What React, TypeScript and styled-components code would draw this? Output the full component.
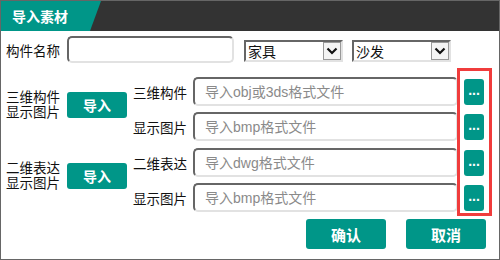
import styled, { createGlobalStyle } from 'styled-components';

const GlobalStyle = createGlobalStyle`
  html, body {
    margin: 0;
    padding: 0;
    background: #fff;
  }
  body {
    font-family: "Liberation Sans", "Noto Sans CJK SC", sans-serif;
  }
`;

const fileRows = [
  {
    title: ['三维构件', '显示图片'],
    rows: [
      { label: '三维构件', hint: '导入obj或3ds格式文件' },
      { label: '显示图片', hint: '导入bmp格式文件' },
    ],
  },
  {
    title: ['二维表达', '显示图片'],
    rows: [
      { label: '二维表达', hint: '导入dwg格式文件' },
      { label: '显示图片', hint: '导入bmp格式文件' },
    ],
  },
];

function Chevron() {
  return (
    <svg width="12" height="8" viewBox="0 0 12 8">
      <polyline points="1.5,1.5 6,6 10.5,1.5" fill="none" stroke="#111" strokeWidth="2.2" />
    </svg>
  );
}

function FakeSelect({ value }: { value: string }) {
  return (
    <SelectBox>
      <SelectText>{value}</SelectText>
      <SelectArrow>
        <Chevron />
      </SelectArrow>
    </SelectBox>
  );
}

function App() {
  return (
    <>
      <GlobalStyle />
      <Dialog>
        <Header>
          <Tab>导入素材</Tab>
        </Header>
        <Body>
          <NameRow>
            <Label>构件名称</Label>
            <NameInput />
            <FakeSelect value="家具" />
            <FakeSelect value="沙发" />
          </NameRow>
          {fileRows.map((group, gi) => (
            <Group key={gi} $first={gi === 0}>
              <GroupLead>
                <LeadLabel>
                  {group.title[0]}
                  <br />
                  {group.title[1]}
                </LeadLabel>
                <TealButton $w={60} $h={26}>导入</TealButton>
              </GroupLead>
              <GroupRows>
                {group.rows.map((row, ri) => (
                  <FileRow key={ri}>
                    <RowLabel>{row.label}</RowLabel>
                    <FileInput placeholder={row.hint} />
                    <DotButton>...</DotButton>
                  </FileRow>
                ))}
              </GroupRows>
            </Group>
          ))}
          <Footer>
            <TealButton $w={80} $h={30} $size={15}>确认</TealButton>
            <TealButton $w={80} $h={30} $size={15}>取消</TealButton>
          </Footer>
        </Body>
        <Highlight />
      </Dialog>
    </>
  );
}

const Dialog = styled.div`
  position: relative;
  width: 500px;
  height: 260px;
  box-sizing: border-box;
  border: 1px solid #666;
  background: #fff;
  display: flex;
  flex-direction: column;
  overflow: hidden;
`;

const Header = styled.div`
  height: 30px;
  flex-shrink: 0;
  background: #333;
  display: flex;
`;

const Tab = styled.div`
  width: 100px;
  height: 100%;
  box-sizing: border-box;
  padding-left: 11px;
  background: #009688;
  clip-path: polygon(0 0, 100% 0, 89% 100%, 0 100%);
  color: #fff;
  font-weight: bold;
  font-size: 14px;
  display: flex;
  align-items: center;
`;

const Body = styled.div`
  display: flex;
  flex-direction: column;
  padding: 5px 13px 0 5px;
`;

const NameRow = styled.div`
  display: flex;
  align-items: center;
  height: 27px;
`;

const Label = styled.div`
  width: 56px;
  flex-shrink: 0;
  margin-right: 5px;
  font-size: 13.5px;
  white-space: nowrap;
  color: #111;
`;

const insetBorder = `
  border-style: solid;
  border-width: 2px;
  border-color: #666 #e2e2e2 #e2e2e2 #666;
`;

const NameInput = styled.input`
  width: 167px;
  height: 27px;
  flex-shrink: 0;
  box-sizing: border-box;
  ${insetBorder}
  border-radius: 5px;
  outline: none;
  margin: 0 10px 0 0;
`;

const SelectBox = styled.div`
  width: 99px;
  height: 22px;
  flex-shrink: 0;
  box-sizing: border-box;
  ${insetBorder}
  margin-right: 9px;
  margin-top: 2px;
  display: flex;
  align-items: center;
  background: #fff;
`;

const SelectText = styled.div`
  flex: 1;
  padding-left: 2px;
  font-size: 14px;
  color: #111;
`;

const SelectArrow = styled.div`
  width: 18px;
  height: 18px;
  box-sizing: border-box;
  border: 1px solid #999;
  background: #f4f4f4;
  display: flex;
  align-items: center;
  justify-content: center;
`;

const Group = styled.div<{ $first: boolean }>`
  display: flex;
  align-items: center;
  margin-top: ${(p) => (p.$first ? 14 : 7)}px;
`;

const GroupLead = styled.div`
  display: flex;
  align-items: center;
  gap: 5px;
  margin-right: 6px;
  padding-bottom: 9px;
  flex-shrink: 0;
`;

const LeadLabel = styled.div`
  width: 56px;
  font-size: 13.5px;
  line-height: 15px;
  white-space: nowrap;
  color: #111;
`;

const TealButton = styled.button<{ $w: number; $h: number; $size?: number }>`
  width: ${(p) => p.$w}px;
  height: ${(p) => p.$h}px;
  flex-shrink: 0;
  border: none;
  border-radius: 3px;
  background: #009688;
  color: #fff;
  font-family: inherit;
  font-weight: bold;
  font-size: ${(p) => p.$size ?? 14}px;
  padding: 0;
  cursor: pointer;
`;

const GroupRows = styled.div`
  display: flex;
  flex-direction: column;
  gap: 6px;
`;

const FileRow = styled.div`
  display: flex;
  align-items: center;
`;

const RowLabel = styled.div`
  width: 54px;
  flex-shrink: 0;
  margin-right: 6px;
  font-size: 13.5px;
  white-space: nowrap;
  color: #111;
`;

const FileInput = styled.input`
  width: 265px;
  height: 29px;
  flex-shrink: 0;
  box-sizing: border-box;
  ${insetBorder}
  border-radius: 5px;
  padding: 0 0 0 10px;
  margin: 0 6px 0 0;
  font-family: inherit;
  font-size: 14px;
  outline: none;
  &::placeholder {
    color: #8a8a8a;
  }
`;

const DotButton = styled.button`
  width: 20px;
  height: 26px;
  flex-shrink: 0;
  border: none;
  border-radius: 3px;
  background: #009688;
  color: #fff;
  font-family: inherit;
  font-weight: bold;
  font-size: 14px;
  padding: 0 0 4px;
  cursor: pointer;
`;

const Footer = styled.div`
  display: flex;
  justify-content: flex-end;
  gap: 20px;
  margin-top: 7px;
`;

const Highlight = styled.div`
  position: absolute;
  left: 456px;
  top: 67px;
  width: 35px;
  height: 148px;
  box-sizing: border-box;
  border: 3px solid #f03c3c;
  pointer-events: none;
`;

export default App;
